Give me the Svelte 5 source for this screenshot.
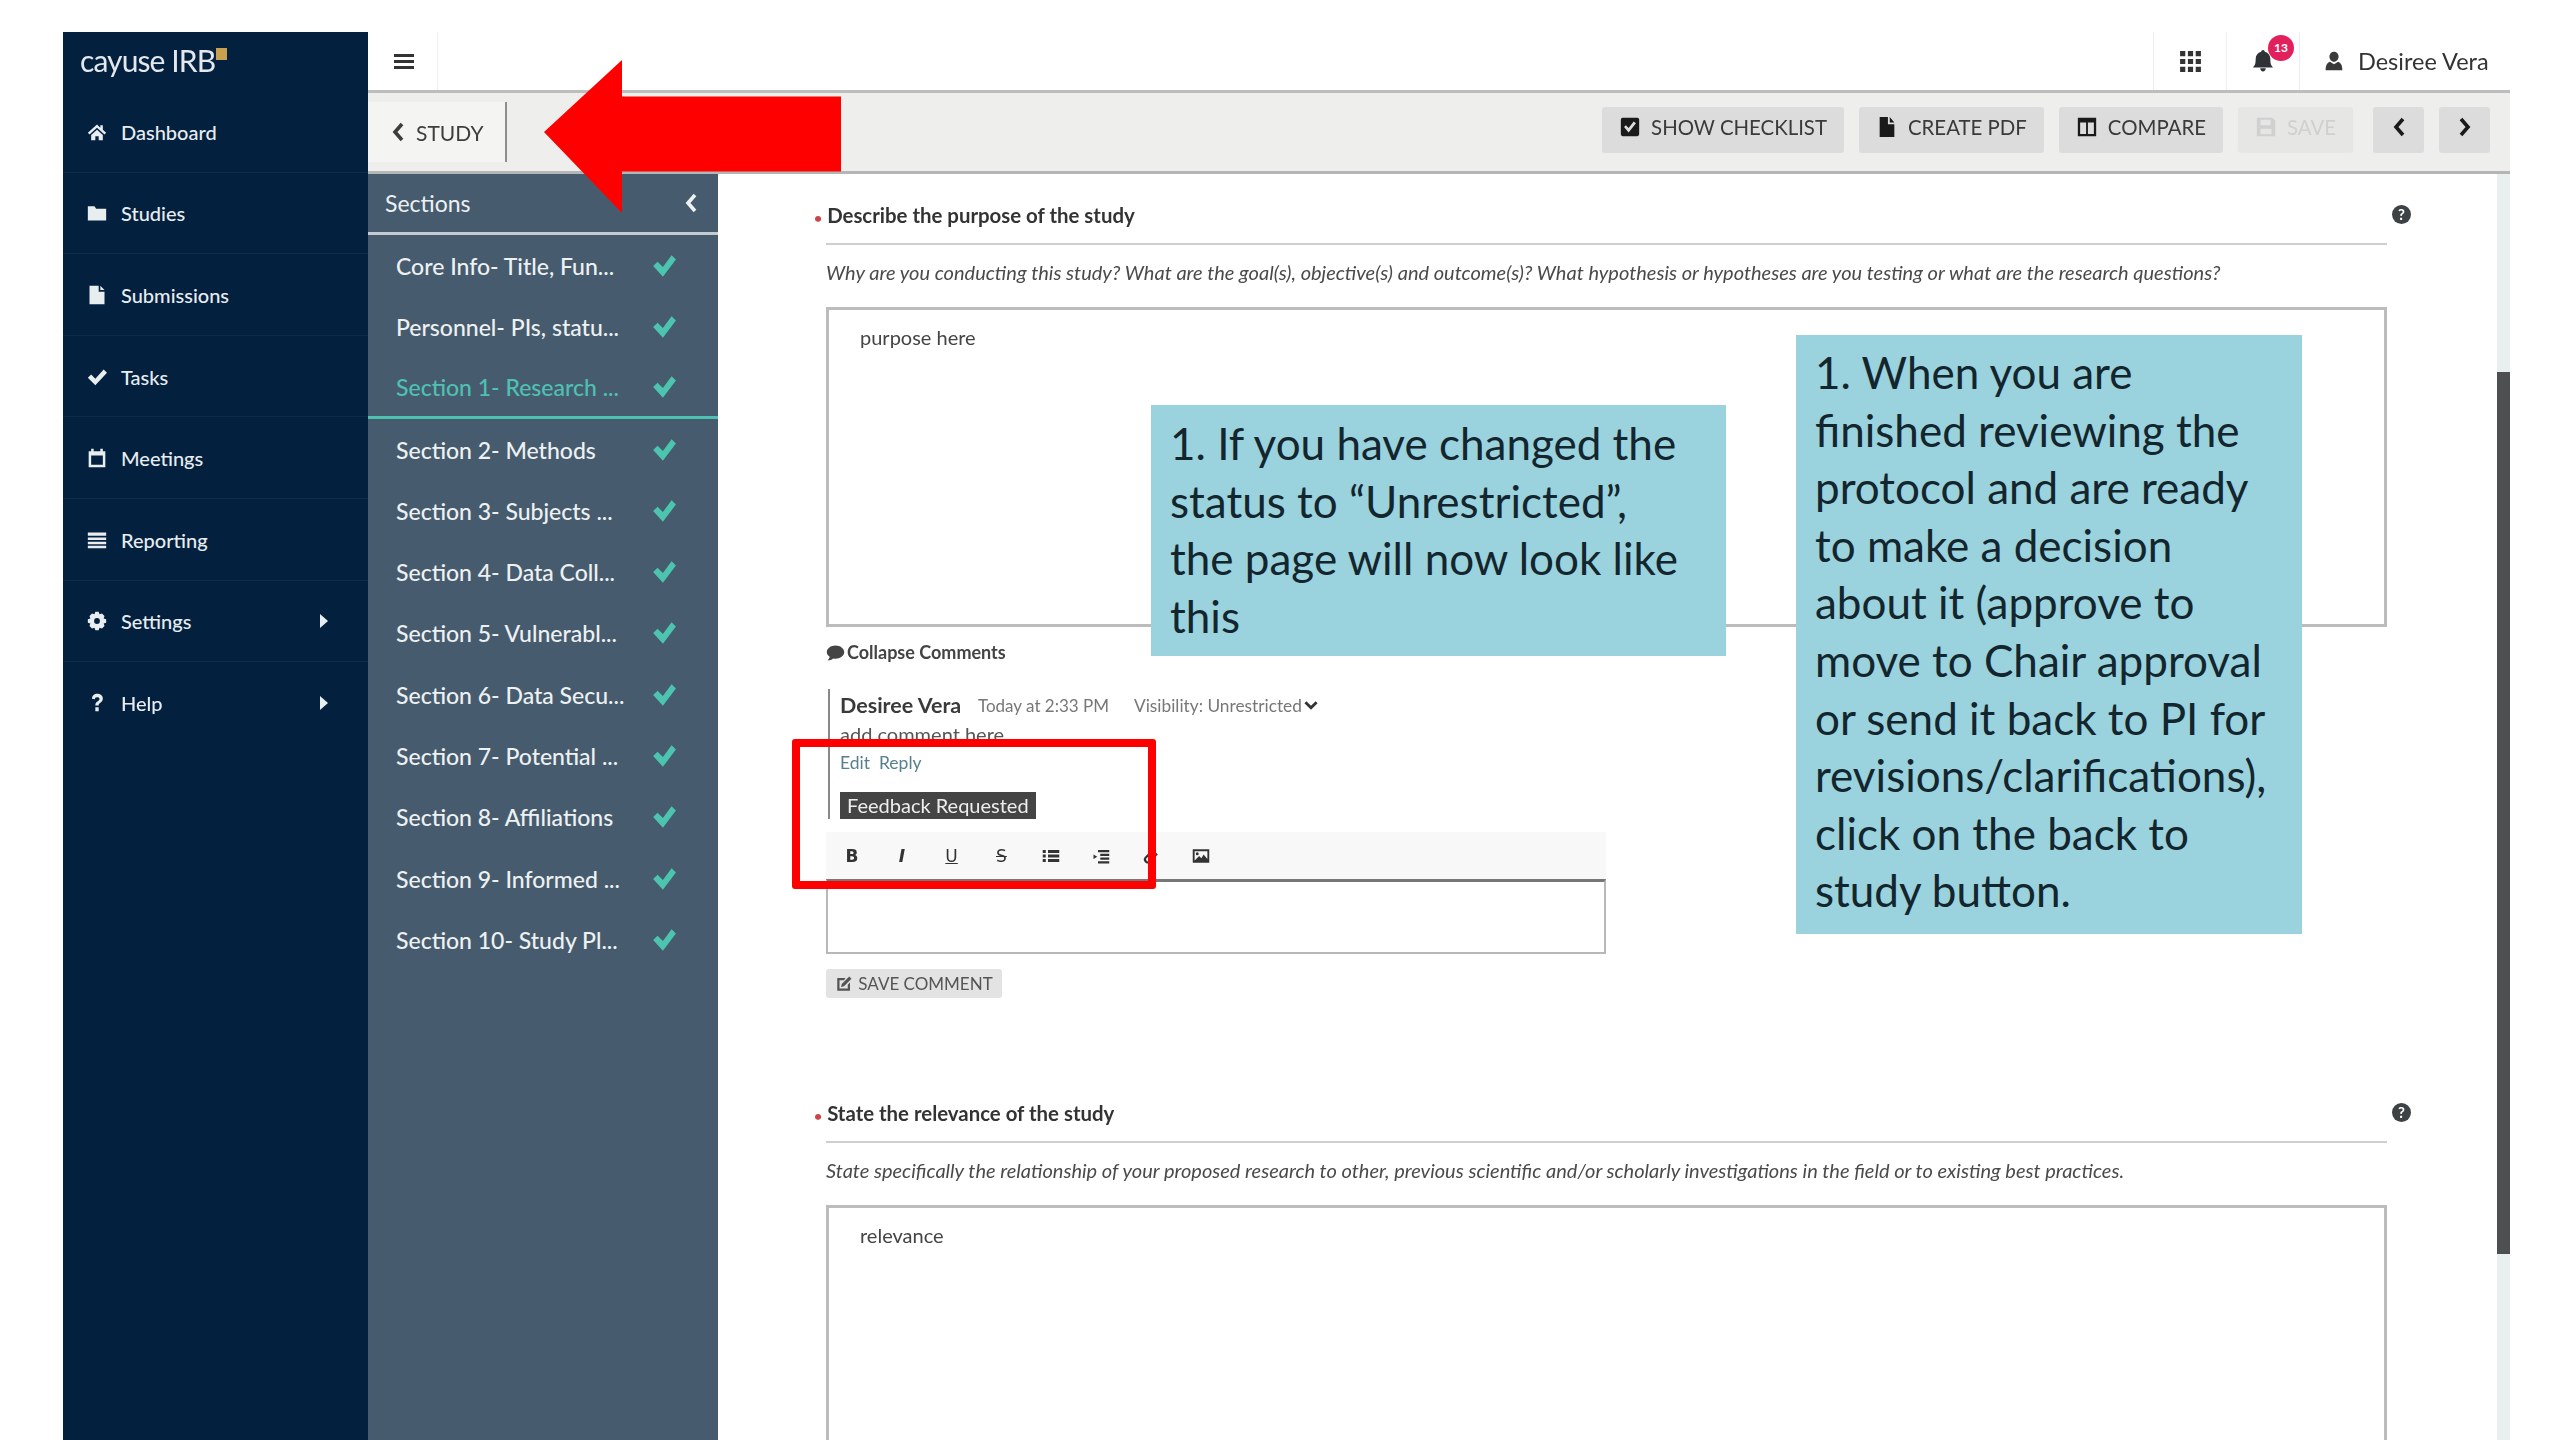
<script lang="ts">
  const nav = [
    { label: 'Dashboard', icon: 'home' },
    { label: 'Studies', icon: 'folder' },
    { label: 'Submissions', icon: 'file' },
    { label: 'Tasks', icon: 'check' },
    { label: 'Meetings', icon: 'cal' },
    { label: 'Reporting', icon: 'list' },
    { label: 'Settings', icon: 'gear', more: true },
    { label: 'Help', icon: 'help', more: true }
  ];
  const sections = [
    'Core Info- Title, Fun...',
    'Personnel- PIs, statu...',
    'Section 1- Research ...',
    'Section 2- Methods',
    'Section 3- Subjects ...',
    'Section 4- Data Coll...',
    'Section 5- Vulnerabl...',
    'Section 6- Data Secu...',
    'Section 7- Potential ...',
    'Section 8- Affiliations',
    'Section 9- Informed ...',
    'Section 10- Study Pl...'
  ];
</script>

{#snippet check()}
  <svg class="tick" viewBox="0 0 24 24"><path d="M2 12l4-4 5 5L19 2l4 4-12 16z" /></svg>
{/snippet}

<div class="screen">
  <div class="app">
    <aside class="nav">
      <div class="brand">cayuse IRB<i></i></div>
      {#each nav as item}
        <div class="nav-item">
          <svg class="nav-icon" viewBox="0 0 24 24">
            {#if item.icon === 'home'}
              <path d="M12 3L1 13l2 2 9-8 9 8 2-2-4-3.600V4h-3v2.900zM5 15.500V22h5v-5h4v5h5v-6.500l-7-6.200z" />
            {:else if item.icon === 'folder'}
              <path d="M1 4h8l2 3h12v14H1z" />
            {:else if item.icon === 'file'}
              <path d="M3 1h11v7h7v15H3zM16 1l5 5h-5z" />
            {:else if item.icon === 'check'}
              <path d="M1 13l4-4 5 5L20 3l4 4-14 15z" />
            {:else if item.icon === 'cal'}
              <path fill-rule="evenodd" d="M2 4h3V1h3v3h8V1h3v3h3v19H2zM5 9v11h14V9z" />
            {:else if item.icon === 'list'}
              <path d="M1 3h22v4H1zM1 9h22v3H1zM1 14h22v3H1zM1 19h22v3H1z" />
            {:else if item.icon === 'gear'}
              <path fill-rule="evenodd" d="M10 1h4l1 3 3-1 3 3-1 3 3 1v4l-3 1 1 3-3 3-3-1-1 3h-4l-1-3-3 1-3-3 1-3-3-1v-4l3-1-1-3 3-3 3 1zM12 8.500a3.500 3.500 0 100 7 3.500 3.500 0 000-7z" />
            {:else}
              <path d="M6 7c0-4 3-6 6-6 4 0 7 2 7 6 0 3-2 4-4 5.500-1 .8-1 1.500-1 2.500h-4c0-2 .5-3.500 2-4.500 1.500-1 3-1.800 3-3.300 0-1.200-1-2-3-2s-2.500 1-2.500 2.300zM10 17h4v5h-4z" />
            {/if}
          </svg>
          <span>{item.label}</span>
          {#if item.more}<b class="caret"></b>{/if}
        </div>
      {/each}
    </aside>

    <div class="body">
      <header class="topbar">
        <div class="burger"><i></i><i></i><i></i></div>
        <div class="top-right">
          <div class="top-cell">
            <svg class="grid-icon" viewBox="0 0 24 24">
              <path d="M2 2h5v5H2zM9.500 2h5v5h-5zM17 2h5v5h-5zM2 9.500h5v5H2zM9.500 9.500h5v5h-5zM17 9.500h5v5h-5zM2 17h5v5H2zM9.500 17h5v5h-5zM17 17h5v5h-5z" />
            </svg>
          </div>
          <div class="top-cell">
            <svg class="bell" viewBox="0 0 24 24">
              <path d="M12 0c1 0 2 1 2 2 4 1 6 4 6 8 0 5 1 7 3 9H1c2-2 3-4 3-9 0-4 2-7 6-8 0-1 1-2 2-2zM9 20h6c0 2-1.300 3.500-3 3.500S9 22 9 20z" />
            </svg>
            <span class="badge">13</span>
          </div>
          <div class="user">
            <svg class="user-icon" viewBox="0 0 24 24">
              <path d="M12 1a5.500 5.500 0 015.500 6c0 3-2.500 6-5.500 6S6.500 10 6.500 7A5.500 5.500 0 0112 1zM7 13l5 3 5-3c3 1 5 4 5 10H2c0-6 2-9 5-10z" />
            </svg>
            <span>Desiree Vera</span>
          </div>
        </div>
      </header>

      <div class="studybar">
        <div class="back">
          <svg class="chev" viewBox="0 0 12 20"><path d="M10 2L3 10l7 8" /></svg>
          <span>STUDY</span>
        </div>
        <div class="actions">
          <button>
            <svg viewBox="0 0 24 24"><path fill-rule="evenodd" d="M4 2h16a2 2 0 012 2v16a2 2 0 01-2 2H4a2 2 0 01-2-2V4a2 2 0 012-2zm1.500 10l5 6 8-10-2.500-2-5.500 7-3-3z" /></svg>
            SHOW CHECKLIST
          </button>
          <button>
            <svg viewBox="0 0 24 24"><path d="M4 1h9v8h7v14H4zM15 1l5 6h-5z" /></svg>
            CREATE PDF
          </button>
          <button>
            <svg viewBox="0 0 24 24"><path fill-rule="evenodd" d="M2 2h20v20H2zM4.500 7v12.500H11V7zM13 7v12.500h6.500V7z" /></svg>
            COMPARE
          </button>
          <button class="off">
            <svg viewBox="0 0 24 24"><path fill-rule="evenodd" d="M2 2h17l3 3v17H2zM6 4v6h11V4zM6 14v6h12v-6z" /></svg>
            SAVE
          </button>
          <button class="pager"><svg class="chev" viewBox="0 0 12 20"><path d="M10 2L3 10l7 8" /></svg></button>
          <button class="pager"><svg class="chev" viewBox="0 0 12 20"><path d="M2 2l7 8-7 8" /></svg></button>
        </div>
      </div>

      <div class="lower">
        <section class="sections">
          <div class="sections-head">
            <span>Sections</span>
            <svg class="chev" viewBox="0 0 12 20"><path d="M10 2L3 10l7 8" /></svg>
          </div>
          {#each sections as name, i}
            <div class="section-row" class:active={i === 2}>
              <span>{name}</span>
              {@render check()}
            </div>
          {/each}
        </section>

        <main class="content">
          <div class="question">
            <div class="q-head">
              <span><em>•</em>Describe the purpose of the study</span>
              <span class="help">?</span>
            </div>
            <p class="hint">Why are you conducting this study? What are the goal(s), objective(s) and outcome(s)? What hypothesis or hypotheses are you testing or what are the research questions?</p>
            <div class="answer tall">purpose here</div>
          </div>

          <div class="collapse">
            <svg viewBox="0 0 24 24"><path d="M12 3c6 0 11 3.600 11 8.500S18 20 12 20c-1 0-2 0-3-.3C7 21.500 5 22 2 22c1.500-1.500 2.500-3 2.600-4.500C2.500 16 1 14 1 11.500 1 6.600 6 3 12 3z" /></svg>
            Collapse Comments
          </div>

          <div class="comment">
            <div class="comment-meta">
              <strong>Desiree Vera</strong>
              <span class="when">Today at 2:33 PM</span>
              <span class="vis">Visibility: Unrestricted</span>
              <svg class="down" viewBox="0 0 20 12"><path d="M2 2l8 8 8-8" /></svg>
            </div>
            <div class="comment-text">add comment here</div>
            <div class="links">Edit&nbsp; Reply</div>
            <span class="tag">Feedback Requested</span>
          </div>

          <div class="editor">
            <div class="tools">
              <span class="t b">B</span>
              <span class="t i">I</span>
              <span class="t u">U</span>
              <span class="t s">S</span>
              <svg viewBox="0 0 24 24"><path d="M1 4h4v4H1zM8 4h15v4H8zM1 10h4v4H1zM8 10h15v4H8zM1 16h4v4H1zM8 16h15v4H8z" /></svg>
              <svg viewBox="0 0 24 24"><path d="M8 4h15v3H8zM11 9h12v3H11zM11 14h12v3H11zM8 19h15v3H8zM2 10l5 3-5 3z" /></svg>
              <svg viewBox="0 0 24 24"><path d="M14 3l7 7-10 11c-3 2-6 1-8-2-1-2-1-4 1-6l8-8 2 2-8 8c-2 2 2 6 4 4l9-9-3-3-7 7-1-1z" /></svg>
              <svg viewBox="0 0 24 24"><path fill-rule="evenodd" d="M1 3h22v18H1zM3.500 5.500V18l6-6 3 3 3-5 5 6V5.500zM7 7a2 2 0 110 4 2 2 0 010-4z" /></svg>
            </div>
            <div class="editor-box"></div>
          </div>
          <button class="save-comment">
            <svg viewBox="0 0 24 24"><path d="M3 4h11l-2 3H6v11h11v-5l3-3v11H3zM19 2l3 3-10 10-4 1 1-4z" /></svg>
            SAVE COMMENT
          </button>

          <div class="question second">
            <div class="q-head">
              <span><em>•</em>State the relevance of the study</span>
              <span class="help">?</span>
            </div>
            <p class="hint">State specifically the relationship of your proposed research to other, previous scientific and/or scholarly investigations in the field or to existing best practices.</p>
            <div class="answer open">relevance</div>
          </div>
        </main>

        <div class="scroll"><div class="thumb"></div></div>
      </div>
    </div>
  </div>

  <!-- slide annotations laid over the screenshot -->
  <svg class="arrow" viewBox="0 0 297 155" preserveAspectRatio="none"><path d="M0 73L78 0v37h219v76H78v42z" /></svg>
  <div class="frame"></div>
  <div class="note note-a">1. If you have changed the status to “Unrestricted”, the page will now look like this</div>
  <div class="note note-b">1. When you are finished reviewing the protocol and are ready to make a decision about it (approve to move to Chair approval or send it back to PI for revisions/clarifications), click on the back to study button.</div>
</div>

<style>
  :global(body) {
    margin: 0;
    background: #fff;
  }

  .screen {
    position: relative;
    width: 2560px;
    height: 1440px;
    overflow: hidden;
    background: #fff;
    font-family: Lato, "Liberation Sans", sans-serif;
  }

  .app {
    display: flex;
    width: 2447px;
    height: 1408px;
    margin-left: 63px;
    padding-top: 32px;
    filter: blur(0.6px);
  }

  svg {
    fill: currentColor;
    flex: none;
  }

  /* left nav */
  .nav {
    flex: none;
    width: 305px;
    background: #03203f;
    color: #e8edf0;
  }
  .brand {
    position: relative;
    height: 59px;
    box-sizing: border-box;
    padding: 10px 0 0 17px;
    font-size: 30px;
    letter-spacing: -0.9px;
    color: #e4e8ec;
  }
  .brand i {
    position: absolute;
    left: 153px;
    top: 16px;
    width: 11px;
    height: 12px;
    background: #c9a04e;
  }
  .nav-item {
    display: flex;
    align-items: center;
    height: 81.6px;
    padding: 0 40px 0 24px;
    font-size: 20px;
    font-weight: 500;
    box-shadow: inset 0 -1px 0 #0d2c4c;
  }
  .nav-icon {
    width: 20px;
    height: 20px;
    margin-right: 14px;
  }
  .nav-item span {
    flex: 1;
  }
  .nav-item:nth-last-child(1) {
    box-shadow: none;
  }
  .caret {
    width: 0;
    height: 0;
    border-left: 8px solid #e8edf0;
    border-top: 7px solid transparent;
    border-bottom: 7px solid transparent;
  }

  /* top bars */
  .body {
    flex: 1;
    min-width: 0;
    display: flex;
    flex-direction: column;
  }
  .topbar {
    flex: none;
    display: flex;
    justify-content: space-between;
    height: 58px;
    border-bottom: 3px solid #bdbdbd;
  }
  .burger {
    width: 70px;
    box-sizing: border-box;
    padding: 22px 0 0 26px;
    border-right: 1px solid #eee;
  }
  .burger i {
    display: block;
    width: 20px;
    height: 3px;
    margin-bottom: 3px;
    background: #333;
  }
  .top-right {
    display: flex;
    align-items: stretch;
    padding-right: 20px;
    color: #333;
  }
  .top-cell {
    position: relative;
    display: flex;
    align-items: center;
    justify-content: center;
    width: 72px;
    border-left: 1px solid #eee;
  }
  .grid-icon {
    width: 25px;
    height: 25px;
  }
  .bell {
    width: 22px;
    height: 26px;
    color: #2e3236;
  }
  .badge {
    position: absolute;
    left: 41px;
    top: 3px;
    width: 26px;
    height: 26px;
    border-radius: 50%;
    background: #e2215c;
    color: #fff;
    font-size: 12px;
    font-weight: 700;
    line-height: 26px;
    text-align: center;
  }
  .user {
    display: flex;
    align-items: center;
    gap: 14px;
    width: 191px;
    box-sizing: border-box;
    padding-left: 24px;
    border-left: 1px solid #eee;
    font-size: 23.500px;
    white-space: nowrap;
  }
  .user-icon {
    width: 20px;
    height: 24px;
    color: #3a3a3a;
  }
  .studybar {
    flex: none;
    display: flex;
    justify-content: space-between;
    align-items: center;
    height: 78px;
    background: #eeefed;
    border-bottom: 3px solid #b4b6b6;
  }
  .back {
    display: flex;
    align-items: center;
    gap: 12px;
    align-self: stretch;
    width: 139px;
    margin: 9px 0;
    padding-left: 24px;
    box-sizing: border-box;
    border-right: 2px solid #8e8e8e;
    background: #f4f4f2;
    color: #3d3d3d;
    font-size: 21px;
  }
  .chev {
    width: 12px;
    height: 20px;
    fill: none;
    stroke: currentColor;
    stroke-width: 3.600;
  }
  .actions {
    display: flex;
    gap: 15px;
    padding: 0 20px 5px 0;
  }
  button {
    display: flex;
    align-items: center;
    justify-content: center;
    gap: 10px;
    height: 46px;
    padding: 0 17px 5px;
    border: 0;
    border-radius: 3px;
    background: #dcdcdc;
    color: #3a3a3a;
    font: 20.400px Lato, "Liberation Sans", sans-serif;
  }
  button svg {
    width: 22px;
    height: 22px;
    color: #1a1a1a;
  }
  button.off {
    width: 115px;
    margin-right: 5px;
    background: #e6e7e5;
    color: #d0d0d0;
  }
  button.off svg {
    color: #d0d0d0;
  }
  button.pager {
    width: 51px;
    padding: 0 0 5px;
  }
  button.pager svg {
    width: 12px;
    height: 20px;
    fill: none;
  }

  /* sections panel */
  .lower {
    flex: 1;
    min-height: 0;
    display: flex;
  }
  .sections {
    flex: none;
    width: 350px;
    background: #465c6e;
    color: #eef1f2;
  }
  .sections-head {
    display: flex;
    justify-content: space-between;
    align-items: center;
    height: 61px;
    box-sizing: border-box;
    padding: 0 21px 0 17px;
    border-bottom: 3px solid #c4ccd2;
    font-size: 23px;
  }
  .section-row {
    display: flex;
    justify-content: space-between;
    align-items: center;
    height: 61.3px;
    box-sizing: border-box;
    padding: 0 41px 0 28px;
    font-size: 23px;
    font-weight: 500;
    white-space: nowrap;
  }
  .section-row.active {
    border-bottom: 3px solid #4fc1b2;
    color: #4fc1b2;
  }
  .tick {
    width: 26px;
    height: 26px;
    color: #4cc4b0;
  }

  /* main form */
  .content {
    flex: 1;
    min-width: 0;
    box-sizing: border-box;
    padding: 21px 110px 0 108px;
    color: #333;
  }
  .q-head {
    display: flex;
    justify-content: space-between;
    align-items: center;
    height: 50px;
    border-bottom: 2px solid #cfcfcf;
    padding-bottom: 9px;
    box-sizing: border-box;
    font-size: 20.400px;
    font-weight: 700;
  }
  .q-head span:first-child {
    margin-left: -12px;
  }
  .q-head em {
    margin-right: 5px;
    color: #c44;
    font-style: normal;
    font-size: 14px;
  }
  .help {
    width: 19px;
    height: 19px;
    margin-right: -24px;
    border-radius: 50%;
    background: #3d4246;
    color: #fff;
    font-size: 15px;
    line-height: 19px;
    text-align: center;
  }
  .hint {
    height: 62px;
    margin: 0;
    padding-top: 15px;
    box-sizing: border-box;
    font-size: 20px;
    font-style: italic;
    color: #4a4a4a;
    white-space: nowrap;
  }
  .answer {
    box-sizing: border-box;
    padding: 15px 31px;
    border: 3px solid #bcbcbc;
    font-size: 20px;
    color: #444;
  }
  .answer.tall {
    height: 320px;
  }
  .answer.open {
    height: 300px;
  }
  .collapse {
    display: flex;
    align-items: center;
    gap: 2px;
    height: 30px;
    margin: 10px 0 0;
    font-size: 18px;
    font-weight: 700;
    color: #444;
  }
  .collapse svg {
    width: 19px;
    height: 19px;
  }
  .comment {
    margin: 22px 0 0 2px;
    height: 130px;
    box-sizing: border-box;
    padding: 4px 0 0 10px;
    border-left: 2px solid #888;
  }
  .comment-meta {
    display: flex;
    align-items: center;
    height: 24px;
    font-size: 17px;
    color: #777;
  }
  .comment-meta strong {
    width: 138px;
    font-size: 21.500px;
    color: #3a3a3a;
  }
  .when {
    width: 156px;
  }
  .vis {
    width: 170px;
    font-size: 17.300px;
  }
  .down {
    width: 14px;
    height: 10px;
    fill: none;
    stroke: #333;
    stroke-width: 4;
  }
  .comment-text {
    height: 29px;
    padding-top: 5px;
    box-sizing: border-box;
    font-size: 20px;
    color: #555;
  }
  .links {
    height: 46px;
    padding-top: 6px;
    box-sizing: border-box;
    font-size: 17.500px;
    color: #56808f;
  }
  .tag {
    display: inline-block;
    height: 27px;
    padding: 0 7px;
    background: #444;
    color: #eee;
    font-size: 20px;
    line-height: 27px;
  }
  .editor {
    width: 780px;
    margin-top: 13px;
  }
  .tools {
    display: flex;
    align-items: center;
    gap: 31.800px;
    height: 47px;
    padding-left: 17px;
    background: #f8f8f8;
    color: #333;
  }
  .tools svg {
    width: 18px;
    height: 18px;
  }
  .t {
    width: 18px;
    text-align: center;
    font-size: 17px;
    font-family: "DejaVu Sans", sans-serif;
  }
  .b {
    font-weight: 700;
  }
  .i {
    font-style: italic;
    font-weight: 700;
  }
  .u {
    text-decoration: underline;
  }
  .s {
    text-decoration: line-through;
  }
  .editor-box {
    height: 75px;
    box-sizing: border-box;
    border: 2px solid #b8b8b8;
    border-top: 3px solid #777;
  }
  .save-comment {
    gap: 5px;
    width: 176px;
    height: 29px;
    margin-top: 15px;
    padding: 0;
    background: #e3e3e3;
    font-size: 17px;
    color: #555;
  }
  .save-comment svg {
    width: 18px;
    height: 18px;
    color: #555;
  }
  .second {
    margin-top: 95px;
  }

  .scroll {
    flex: none;
    width: 13px;
    background: #e9eeee;
  }
  .thumb {
    height: 882px;
    margin-top: 198px;
    background: #4d4f50;
  }

  /* annotations */
  .arrow {
    position: absolute;
    left: 544px;
    top: 60px;
    width: 297px;
    height: 153px;
    fill: #fe0000;
  }
  .frame {
    position: absolute;
    left: 792px;
    top: 739px;
    width: 364px;
    height: 150px;
    box-sizing: border-box;
    border: 8px solid #fe0000;
    border-radius: 3px;
  }
  .note {
    position: absolute;
    box-sizing: border-box;
    background: #9ad2de;
    color: #14262d;
    font-size: 44px;
    line-height: 57.600px;
  }
  .note-a {
    left: 1151px;
    top: 405px;
    width: 575px;
    height: 251px;
    padding: 10px 40px 10px 19px;
  }
  .note-b {
    left: 1796px;
    top: 335px;
    width: 506px;
    height: 599px;
    padding: 9px 10px 9px 19px;
  }
</style>
